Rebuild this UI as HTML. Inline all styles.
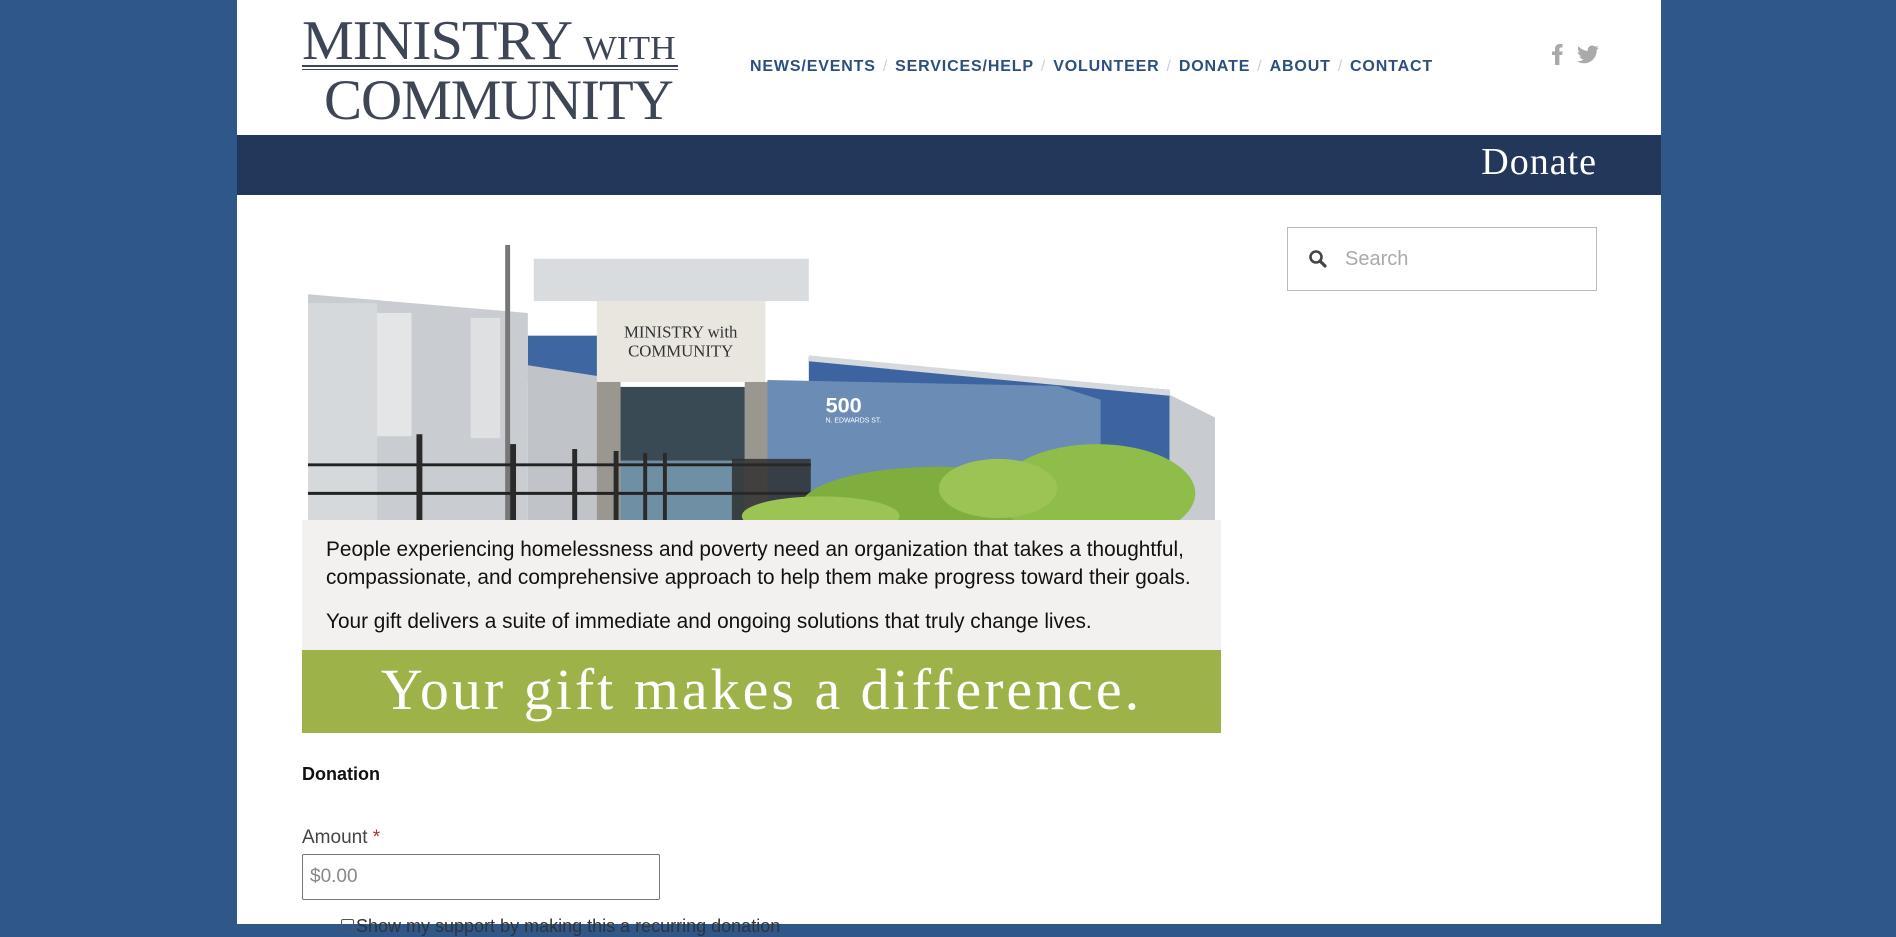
<!DOCTYPE html>
<html><head><meta charset="utf-8"><style>
*{margin:0;padding:0;box-sizing:border-box}
body{width:1896px;height:924px;overflow:hidden;background:#2f5789;font-family:"Liberation Sans",sans-serif}
.wrap{position:absolute;left:237px;top:0;width:1424px;height:924px;background:#fff}
.abs{position:absolute}
.logo{left:65px;top:12px;width:376px;height:106px;font-family:"Liberation Serif",serif;color:#3e4656}
.logo .l1{position:absolute;left:0;top:-3px;font-size:56px;letter-spacing:-1px;white-space:nowrap;transform:scaleX(1.04);transform-origin:left}
.logo .l1 small{font-size:34px;letter-spacing:0}
.logo .rule{position:absolute;left:0;top:53px;width:376px;border-top:2px solid #3e4656;border-bottom:1px solid #3e4656;height:5px}
.logo .l2{position:absolute;left:22px;top:56px;font-size:57px;letter-spacing:-1px;white-space:nowrap;transform:scaleX(1.0);transform-origin:left}
.nav{left:513px;top:58px;font-size:16px;font-weight:bold;color:#2b4f7e;letter-spacing:0.85px;white-space:nowrap}
.nav span{color:#d0d0d0;font-weight:normal;margin:0 7px}
.bar{left:0;top:135px;width:1424px;height:60px;background:#22375a}
.bar div{position:absolute;right:64px;top:5px;font-family:"Liberation Serif",serif;color:#fff;font-size:38px;letter-spacing:1px}
.gray{left:65px;top:520px;width:919px;height:130px;background:#f2f1ef;padding:16px 24px;font-size:20.8px;color:#111;line-height:28px}
.green{left:65px;top:650px;width:919px;height:83px;background:#9db34a;color:#fff;font-family:"Liberation Serif",serif;font-size:58px;text-align:center;line-height:80px;letter-spacing:3px}
.search{left:1050px;top:227px;width:310px;height:64px;border:1px solid #bbb}
</style></head><body>
<div class="wrap">
<div class="abs logo"><div class="l1">MINISTRY <small>WITH</small></div><div class="rule"></div><div class="l2">COMMUNITY</div></div>
<div class="abs nav">NEWS/EVENTS<span>/</span>SERVICES/HELP<span>/</span>VOLUNTEER<span>/</span>DONATE<span>/</span>ABOUT<span>/</span>CONTACT</div>
<svg class="abs" style="left:1314px;top:43px" width="50" height="24" viewBox="0 0 50 24"><path d="M4 22V12H1V8.5h3V6c0-3 1.5-5 5-5h2.5v3.5H10c-1.2 0-1.6.5-1.6 1.6V8.5h3.2l-.5 3.5H8.4v10z" fill="#aaa"/><g transform="translate(25,0)"><path d="M23 4.6c-.8.4-1.7.6-2.6.7.9-.6 1.6-1.4 2-2.5-.9.5-1.9.9-2.9 1.1-.8-.9-2-1.4-3.3-1.4-2.5 0-4.5 2-4.5 4.5 0 .4 0 .7.1 1C8 7.8 4.7 6 2.5 3.3c-.4.7-.6 1.4-.6 2.3 0 1.6.8 2.9 2 3.7-.7 0-1.4-.2-2-.6v.1c0 2.2 1.6 4 3.6 4.4-.4.1-.8.2-1.2.2-.3 0-.6 0-.8-.1.6 1.8 2.2 3.1 4.2 3.1-1.5 1.2-3.5 1.900-5.600 1.900H1c2 1.300 4.400 2 6.900 2 8.300 0 12.800-6.900 12.800-12.800v-.6c.9-.6 1.600-1.400 2.300-2.300z" fill="#aaa"/></g></svg>
<div class="abs bar"><div>Donate</div></div>
<svg class="abs" style="left:65px;top:242px" width="919" height="278" viewBox="0 0 920 282">
<rect width="920" height="282" fill="#fff"/>
<polygon points="508,117 874,150 874,282 508,282" fill="#3d64a0"/>
<polygon points="508,115 874,150 874,156 508,121" fill="#d5d8dc"/>
<polygon points="874,155 920,178 920,282 874,282" fill="#c8ccd0"/>
<rect x="223" y="95" width="75" height="45" fill="#3e66a0"/>
<polygon points="0,53 223,72 223,282 0,282" fill="#c9cdd1"/>
<rect x="0" y="62" width="70" height="220" fill="#d6d9dc"/>
<rect x="70" y="72" width="35" height="125" fill="#e4e5e6"/>
<rect x="165" y="77" width="30" height="122" fill="#dfe0e2"/>
<polygon points="223,125 300,137 300,282 223,282" fill="#c0c4c8"/>
<rect x="229" y="17" width="279" height="43" fill="#d9dcdf"/>
<rect x="293" y="60" width="171" height="82" fill="#e9e6e0"/>
<text x="378" y="97" font-family="Liberation Serif,serif" font-size="17" fill="#333" text-anchor="middle">MINISTRY with</text>
<text x="378" y="116" font-family="Liberation Serif,serif" font-size="17" fill="#333" text-anchor="middle">COMMUNITY</text>
<rect x="293" y="142" width="24" height="140" fill="#9a9690"/>
<rect x="443" y="142" width="24" height="140" fill="#9a9690"/>
<rect x="317" y="147" width="126" height="75" fill="#3a4a55"/>
<rect x="317" y="222" width="126" height="60" fill="#6f8fa5"/>
<polygon points="466,140 760,146 804,160 804,282 466,282" fill="#6a8cb5"/>
<text x="525" y="173" font-family="Liberation Sans,sans-serif" font-weight="bold" font-size="22" fill="#fff">500</text>
<text x="525" y="183" font-family="Liberation Sans,sans-serif" font-size="7" fill="#fff">N. EDWARDS ST.</text>
<rect x="200" y="3" width="5" height="279" fill="#777"/>
<g stroke="#222" stroke-width="3"><line x1="0" y1="226" x2="510" y2="226"/><line x1="0" y1="255" x2="510" y2="255"/></g>
<g fill="#2a2a2a"><rect x="110" y="195" width="6" height="87"/><rect x="205" y="205" width="6" height="77"/><rect x="268" y="210" width="5" height="72"/><rect x="310" y="212" width="5" height="70"/><rect x="340" y="214" width="4" height="68"/><rect x="360" y="214" width="4" height="68"/><rect x="430" y="220" width="80" height="62" opacity=".8"/></g>
<ellipse cx="640" cy="268" rx="140" ry="40" fill="#7fae3e"/>
<ellipse cx="800" cy="255" rx="100" ry="50" fill="#8fbd4a"/>
<ellipse cx="700" cy="250" rx="60" ry="30" fill="#9cc455"/>
<ellipse cx="520" cy="278" rx="80" ry="20" fill="#9cc455"/>
</svg>
<div class="abs gray"><p>People experiencing homelessness and poverty need an organization that takes a thoughtful, compassionate, and comprehensive approach to help them make progress toward their goals.</p><p style="margin-top:16px">Your gift delivers a suite of immediate and ongoing solutions that truly change lives.</p></div>
<div class="abs green">Your gift makes a difference.</div>
<div class="abs" style="left:65px;top:764px;font-size:18px;font-weight:bold;color:#111">Donation</div>
<div class="abs" style="left:65px;top:827px;font-size:19px;color:#444">Amount <span style="color:#a33">*</span></div>
<div class="abs" style="left:65px;top:854px;width:358px;height:46px;border:1px solid #777;border-radius:2px;padding:11px 7px;font-size:19px;color:#888">$0.00</div>
<div class="abs" style="left:104px;top:916px;font-size:18px;color:#333;white-space:nowrap"><span style="display:inline-block;width:13px;height:13px;border:1px solid #555;border-radius:2px;margin-right:2px"></span>Show my support by making this a recurring donation</div>
<div class="abs search"><svg class="abs" style="left:20px;top:21px" width="20" height="20" viewBox="0 0 20 20"><circle cx="8" cy="8" r="5.5" fill="none" stroke="#444" stroke-width="2.6"/><line x1="12" y1="12" x2="17" y2="17" stroke="#444" stroke-width="3.2" stroke-linecap="round"/></svg><div class="abs" style="left:57px;top:20px;font-size:20px;color:#aaa">Search</div></div>
</div>
</body></html>
